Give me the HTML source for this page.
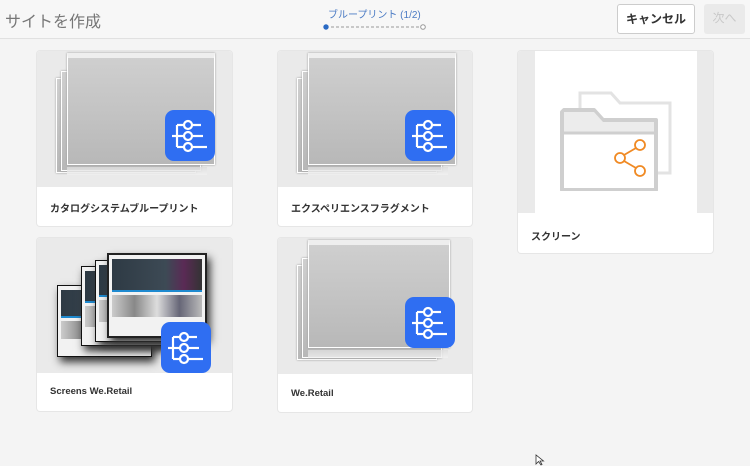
<!DOCTYPE html>
<html><head><meta charset="utf-8"><style>
*{box-sizing:border-box;margin:0;padding:0}
body{width:750px;height:464px;background:#f4f4f4;font-family:"Liberation Sans","Noto Sans CJK JP",sans-serif;position:relative;overflow:hidden}
.hdr{position:absolute;left:0;top:0;width:750px;height:39px;background:#f7f7f7;border-bottom:1px solid #e1e1e1}
.title{position:absolute;left:5px;top:8px;font-size:16px;color:#777}
.step{position:absolute;left:328px;top:6px;font-size:10px;color:#4b7bc4}
.prog{position:absolute;left:323px;top:24px;width:104px;height:6px}
.btn{position:absolute;top:4px;height:30px;border-radius:3px;font-size:12px;font-weight:bold;text-align:center;line-height:28px}
.card{position:absolute;background:#fff;border-radius:3px;box-shadow:0 0 0 1px #e6e6e6}
.img{position:absolute;left:0;top:0;right:0;background:#eaeaea;border-radius:3px 3px 0 0;overflow:hidden}
.lbl{position:absolute;left:13px;font-size:10px;font-weight:bold;color:#333}
.win{position:absolute;background:linear-gradient(#cfcfcf,#b8b8b8);border:1px solid #fff;box-shadow:0 0 2px #999}
.win.f{border-top:5px solid #eee}
.ico{position:absolute;width:50px;height:51px}
.sw{position:absolute;background:#f2f2f2;border:1px solid #111;box-shadow:3px 5px 8px #333;padding:4px 3px}
.sw .h{height:45%;background:linear-gradient(90deg,#2e3a44,#3d4a55 60%,#5a2a55 80%,#333);border-bottom:2px solid #1e8ad0}
.sw .b{margin-top:3px;height:30%;background:linear-gradient(90deg,#ccc,#888,#ddd,#667,#bbb)}
</style></head><body>
<div class="hdr">
<div class="title">サイトを作成</div>
<div class="step">ブループリント (1/2)</div>
<svg class="prog" viewBox="0 0 104 6"><circle cx="3" cy="3" r="2.7" fill="#2a6ac4"/><line x1="8" y1="3" x2="97" y2="3" stroke="#999" stroke-dasharray="3,2"/><circle cx="100" cy="3" r="2.3" fill="#fff" stroke="#999"/></svg>
<div class="btn" style="left:617px;width:78px;background:#fff;border:1px solid #ccc;color:#333">キャンセル</div>
<div class="btn" style="left:704px;width:41px;background:#eaeaea;color:#c8c8c8;font-weight:normal">次へ</div>
</div>

<svg width="0" height="0" style="position:absolute"><defs><g id="bp"><rect x="0" y="0" width="50" height="51" rx="9" fill="#2f6ef2"/><g stroke="#fff" stroke-width="2.2" fill="none"><line x1="12" y1="15" x2="12" y2="37"/><line x1="12" y1="15" x2="19" y2="15"/><line x1="7" y1="26" x2="19" y2="26"/><line x1="12" y1="37" x2="19" y2="37"/><circle cx="23" cy="15" r="4"/><circle cx="23" cy="26" r="4"/><circle cx="23" cy="37" r="4"/><line x1="27" y1="15" x2="36" y2="15"/><line x1="27" y1="26" x2="38" y2="26"/><line x1="27" y1="37" x2="42" y2="37"/></g></g></defs></svg>

<!-- card 1 -->
<div class="card" style="left:37px;top:51px;width:195px;height:175px">
<div class="img" style="height:136px">
<div class="win" style="left:19px;top:27px;width:140px;height:95px"></div>
<div class="win" style="left:24px;top:20px;width:140px;height:100px"></div>
<div class="win f" style="left:30px;top:2px;width:148px;height:112px"></div>
<div style="position:absolute;left:30px;top:116px;width:140px;height:8px;background:linear-gradient(#ddd,#f2f2f2);opacity:.8"></div>
<svg class="ico" style="left:128px;top:59px"><use href="#bp"/></svg>
</div>
<div class="lbl" style="top:149px">カタログシステムブループリント</div>
</div>

<!-- card 2 -->
<div class="card" style="left:278px;top:51px;width:194px;height:175px">
<div class="img" style="height:136px">
<div class="win" style="left:19px;top:27px;width:140px;height:95px"></div>
<div class="win" style="left:24px;top:20px;width:140px;height:100px"></div>
<div class="win f" style="left:30px;top:2px;width:148px;height:112px"></div>
<div style="position:absolute;left:30px;top:116px;width:140px;height:8px;background:linear-gradient(#ddd,#f2f2f2);opacity:.8"></div>
<svg class="ico" style="left:127px;top:59px"><use href="#bp"/></svg>
</div>
<div class="lbl" style="top:149px">エクスペリエンスフラグメント</div>
</div>

<!-- card 3 -->
<div class="card" style="left:518px;top:51px;width:195px;height:202px">
<div class="img" style="height:162px">
<div style="position:absolute;left:17px;top:0;width:162px;height:162px;background:#fff"></div>
<svg style="position:absolute;left:40px;top:30px" width="115" height="110" viewBox="0 0 115 110">
<path d="M22 40 V12 H53 L62 22 H112 V92 H98" fill="none" stroke="#e3e3e3" stroke-width="3"/>
<path d="M4 31 V109 H98 V39 H45 L36 29 H6 Z" fill="#fff" stroke="#cfcfcf" stroke-width="4" stroke-linejoin="round"/>
<path d="M6 31 H36 L45 41 H96 V52 H6 Z" fill="#ececec"/>
<line x1="5" y1="52" x2="97" y2="52" stroke="#cfcfcf" stroke-width="3"/>
<g stroke="#f08a24" stroke-width="1.8" fill="none"><circle cx="62" cy="77" r="5"/><circle cx="82" cy="64" r="5"/><circle cx="82" cy="90" r="5"/><line x1="66" y1="74" x2="78" y2="67"/><line x1="66" y1="80" x2="78" y2="87"/></g>
</svg>
</div>
<div class="lbl" style="top:177px">スクリーン</div>
</div>

<!-- card 4 -->
<div class="card" style="left:37px;top:238px;width:195px;height:173px">
<div class="img" style="height:135px">
<div class="sw" style="left:20px;top:47px;width:95px;height:72px"><div class="h"></div><div class="b"></div></div>
<div class="sw" style="left:44px;top:28px;width:95px;height:80px"><div class="h"></div><div class="b"></div></div>
<div class="sw" style="left:58px;top:22px;width:100px;height:82px"><div class="h"></div><div class="b"></div></div>
<div class="sw" style="left:70px;top:15px;width:100px;height:85px;border:2px solid #222"><div class="h"></div><div class="b"></div></div>
<svg class="ico" style="left:124px;top:84px"><use href="#bp"/></svg>
</div>
<div class="lbl" style="top:148px;font-size:9.5px">Screens We.Retail</div>
</div>

<!-- card 5 -->
<div class="card" style="left:278px;top:238px;width:194px;height:174px">
<div class="img" style="height:136px">
<div class="win" style="left:19px;top:27px;width:140px;height:95px"></div>
<div class="win" style="left:24px;top:20px;width:140px;height:100px"></div>
<div class="win f" style="left:30px;top:2px;width:142px;height:108px"></div>
<div style="position:absolute;left:30px;top:112px;width:140px;height:8px;background:linear-gradient(#ddd,#f2f2f2);opacity:.8"></div>
<svg class="ico" style="left:127px;top:59px"><use href="#bp"/></svg>
</div>
<div class="lbl" style="top:150px;font-size:9.5px">We.Retail</div>
</div>

<svg style="position:absolute;left:535px;top:454px" width="10" height="12"><path d="M1 1 V10 L3.5 7.5 L6 11 L7 10.5 L5 7 H8.5 Z" fill="#fff" stroke="#333" stroke-width=".8"/></svg>
</body></html>
